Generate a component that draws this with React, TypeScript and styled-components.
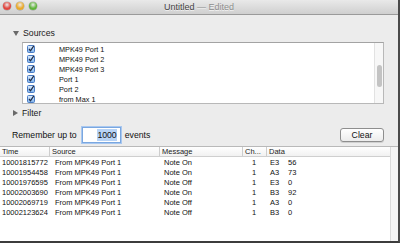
import React from "react";
import styled, {createGlobalStyle} from "styled-components";

const GlobalStyle = createGlobalStyle`
  html, body {
    margin: 0;
    padding: 0;
    background: #ececec;
  }
  body {
    font-family: "Liberation Sans", Arial, sans-serif;
  }
`

const sources = ['MPK49 Port 1', 'MPK49 Port 2', 'MPK49 Port 3', 'Port 1', 'Port 2', 'from Max 1']

type MidiEvent = {time: string, source: string, message: string, channel: string, note: string, value: string}

const events: MidiEvent[] = [
    {time: '10001815772', source: 'From MPK49 Port 1', message: 'Note On', channel: '1', note: 'E3', value: '56'},
    {time: '10001954458', source: 'From MPK49 Port 1', message: 'Note On', channel: '1', note: 'A3', value: '73'},
    {time: '10001976595', source: 'From MPK49 Port 1', message: 'Note Off', channel: '1', note: 'E3', value: '0'},
    {time: '10002003690', source: 'From MPK49 Port 1', message: 'Note On', channel: '1', note: 'B3', value: '92'},
    {time: '10002069719', source: 'From MPK49 Port 1', message: 'Note Off', channel: '1', note: 'A3', value: '0'},
    {time: '10002123624', source: 'From MPK49 Port 1', message: 'Note Off', channel: '1', note: 'B3', value: '0'},
]

const CheckBox = () => (
    <svg width="8" height="8" viewBox="0 0 8 8">
        <defs>
            <linearGradient id="cb" x1="0" y1="0" x2="0" y2="1">
                <stop offset="0" stopColor="#e2effd"/>
                <stop offset="1" stopColor="#7cb0ec"/>
            </linearGradient>
        </defs>
        <rect x="0.5" y="0.5" width="7" height="7" rx="1" fill="url(#cb)" stroke="#4a7cc4"/>
        <path d="M2 4 L3.5 5.8 L6.8 0.8" fill="none" stroke="#1c2a44" strokeWidth="1.2"/>
    </svg>
)

export default function App() {
    return (
        <Window>
            <GlobalStyle/>
            <TitleBar>
                <Lights>
                    <Light color="#e0463f"/>
                    <Light color="#e9a92b"/>
                    <Light color="#5fb43b"/>
                </Lights>
                <Title>Untitled <Edited>— Edited</Edited></Title>
            </TitleBar>
            <Body>
                <Disclosure>
                    <Triangle open/>
                    <span>Sources</span>
                </Disclosure>
                <SourceList>
                    <SourceRows>
                        {sources.map(s => (
                            <SourceRow key={s}>
                                <CheckBox/>
                                <SourceName>{s}</SourceName>
                            </SourceRow>
                        ))}
                    </SourceRows>
                    <ScrollGutter>
                        <ScrollThumb/>
                    </ScrollGutter>
                </SourceList>
                <Disclosure>
                    <Triangle/>
                    <span>Filter</span>
                </Disclosure>
                <RememberRow>
                    <Label>Remember up to</Label>
                    <NumberInput><Selected>1000</Selected></NumberInput>
                    <Label>events</Label>
                    <Spacer/>
                    <Button>Clear</Button>
                </RememberRow>
            </Body>
            <TableArea>
                <Table>
                    <HeaderRow>
                        <HeadCell width={50}>Time</HeadCell>
                        <HeadCell width={110}>Source</HeadCell>
                        <HeadCell width={83}>Message</HeadCell>
                        <HeadCell width={24}>Ch...</HeadCell>
                        <HeadCell width={123} last>Data</HeadCell>
                    </HeaderRow>
                    {events.map(e => (
                        <Row key={e.time}>
                            <Cell width={50}>{e.time}</Cell>
                            <Cell width={110} pad={3}>{e.source}</Cell>
                            <Cell width={83} pad={2}>{e.message}</Cell>
                            <Cell width={24} pad={7}>{e.channel}</Cell>
                            <Cell width={19} pad={1}>{e.note}</Cell>
                            <Cell width={40}>{e.value}</Cell>
                        </Row>
                    ))}
                </Table>
                <TableGutter/>
            </TableArea>
        </Window>
    )
}

const Window = styled.div`
  width: 400px;
  height: 243px;
  display: flex;
  flex-direction: column;
  background: #ececec;
  overflow: hidden;
  box-sizing: border-box;
  border-right: 2px solid #4a4a4a;
  border-bottom: 2px solid #3c3c3c;
`

const TitleBar = styled.div`
  height: 14px;
  flex: none;
  display: flex;
  align-items: center;
  justify-content: center;
  position: relative;
  background: linear-gradient(#e9e9e9, #cfcfcf);
  border-bottom: 1px solid #9a9a9a;
`

const Lights = styled.div`
  position: absolute;
  left: 3px;
  top: 2px;
  display: flex;
  gap: 5px;
`

const Light = styled.div<{color: string}>`
  width: 8px;
  height: 8px;
  border-radius: 50%;
  background: radial-gradient(circle at 50% 35%, #fff6 0, ${p => p.color} 55%);
  box-shadow: 0 0 0 0.5px #0004;
`

const Title = styled.div`
  font-size: 9px;
  color: #3f3f3f;
  text-shadow: 0 1px 0 #f2f2f2;
`

const Edited = styled.span`
  color: #8d8d8d;
`

const Body = styled.div`
  display: flex;
  flex-direction: column;
  padding: 13px 14px 0 0;
`

const Disclosure = styled.div`
  height: 10px;
  display: flex;
  align-items: center;
  gap: 4px;
  padding-left: 13px;
  font-size: 8.7px;
  color: #1a1a1a;
  & + & {
    margin-top: 4px;
  }
`

const Triangle = styled.div<{open?: boolean}>`
  width: 0;
  height: 0;
  ${p => p.open
    ? `border-left: 3px solid transparent; border-right: 3px solid transparent; border-top: 5px solid #6a6a6a;`
    : `border-top: 3px solid transparent; border-bottom: 3px solid transparent; border-left: 5px solid #6a6a6a;`}
`

const SourceList = styled.div`
  margin: 4px 0 4px 22px;
  height: 62px;
  box-sizing: border-box;
  background: #fff;
  border: 1px solid #b8b8b8;
  border-top-color: #a3a3a3;
  display: flex;
  overflow: hidden;
`

const SourceRows = styled.div`
  flex: 1;
  padding-top: 1px;
`

const SourceRow = styled.div`
  height: 10px;
  display: flex;
  align-items: center;
  padding-left: 4px;
`

const SourceName = styled.span`
  margin-left: 24px;
  font-size: 7.3px;
  color: #111;
`

const ScrollGutter = styled.div`
  width: 8px;
  background: #f7f7f7;
  border-left: 1px solid #e2e2e2;
  display: flex;
  justify-content: center;
  padding-top: 22px;
`

const ScrollThumb = styled.div`
  width: 5px;
  height: 22px;
  border-radius: 3px;
  background: #c3c3c3;
`

const RememberRow = styled.div`
  display: flex;
  align-items: center;
  height: 16px;
  margin-top: 9px;
  padding-left: 12px;
  gap: 5px;
`

const Label = styled.span`
  font-size: 8.7px;
  color: #111;
`

const NumberInput = styled.div`
  width: 39px;
  height: 16px;
  box-sizing: border-box;
  background: #fff;
  border: 1px solid #7aa7e0;
  box-shadow: 0 0 0 1px #a9c8f0;
  display: flex;
  align-items: center;
  justify-content: flex-end;
  padding-right: 3px;
  font-size: 8.7px;
  margin-right: -1px;
`

const Selected = styled.span`
  background: #b7d3f6;
  color: #111;
  padding: 1px 0;
`

const Spacer = styled.div`
  flex: 1;
`

const Button = styled.div`
  width: 44px;
  height: 14px;
  box-sizing: border-box;
  border: 1px solid #8e8e8e;
  border-radius: 3px;
  background: linear-gradient(#ffffff, #ececec);
  box-shadow: 0 1px 0 #d0d0d0;
  display: flex;
  align-items: center;
  justify-content: center;
  font-size: 8.7px;
  color: #111;
`

const TableArea = styled.div`
  flex: 1;
  display: flex;
  margin-top: 3px;
  border-top: 1px solid #b9b9b9;
  background: #fff;
`

const Table = styled.div`
  width: 390px;
  display: flex;
  flex-direction: column;
  background: #fff;
`

const HeaderRow = styled.div`
  height: 9px;
  display: flex;
  background: linear-gradient(#ffffff, #f1f1f1);
  border-bottom: 1px solid #cfcfcf;
`

const HeadCell = styled.div<{width: number, last?: boolean}>`
  width: ${p => p.width}px;
  box-sizing: border-box;
  padding-left: 2px;
  font-size: 7.5px;
  line-height: 9px;
  color: #222;
  border-right: ${p => p.last ? 'none' : '1px solid #cdcdcd'};
`

const Row = styled.div`
  height: 10px;
  display: flex;
  align-items: center;
`

const Cell = styled.div<{width: number, pad?: number}>`
  width: ${p => p.width}px;
  box-sizing: border-box;
  padding-left: ${p => 2 + (p.pad ?? 0)}px;
  font-size: 7.5px;
  color: #111;
  white-space: nowrap;
`

const TableGutter = styled.div`
  flex: 1;
  background: #f4f4f4;
  border-left: 1px solid #dadada;
`
